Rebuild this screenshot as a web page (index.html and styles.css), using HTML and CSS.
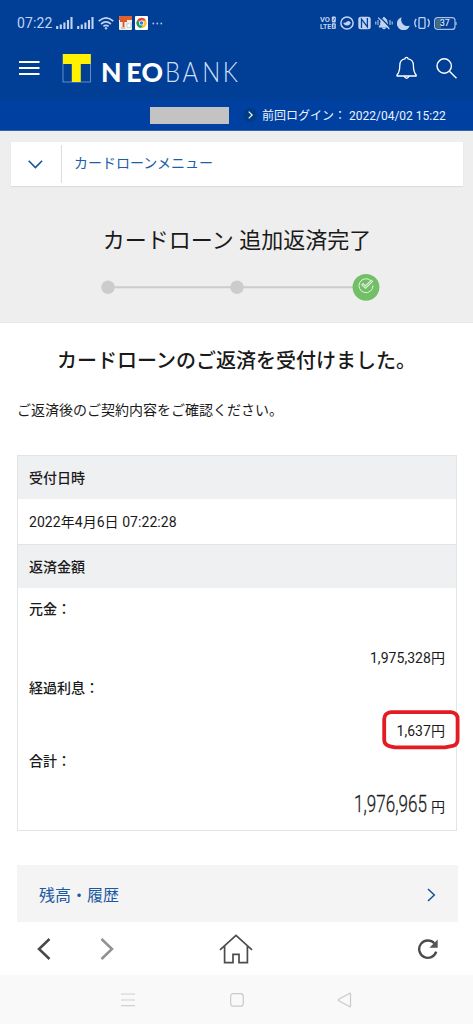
FILE: index.html
```html
<!DOCTYPE html>
<html lang="ja">
<head>
<meta charset="utf-8">
<title>カードローン 追加返済完了</title>
<link rel="stylesheet" href="styles.css">
</head>
<body>
<header class="header">
  <div class="status">
    <span class="clock">07:22</span>
    <svg class="signal" width="17" height="12" viewBox="0 0 17 12"><path d="M1.2 9v3M4.8 7.5V12M8.4 5.5V12M12 3V12M15.5 0V12" stroke="#c2d3f2" stroke-width="2.1"/></svg>
    <svg class="signal" width="17" height="12" viewBox="0 0 17 12"><path d="M1.2 9v3M4.8 7.5V12M8.4 5.5V12M12 3V12M15.5 0V12" stroke="#c2d3f2" stroke-width="2.1"/></svg>
    <svg class="wifi" width="16" height="13" viewBox="0 0 16 13" fill="none" stroke="#c2d3f2" stroke-width="1.7"><path d="M.7 4.2Q8-2.3 15.3 4.2M3.1 7Q8 2.6 12.9 7M5.4 9.4Q8 7.3 10.6 9.4"/><circle cx="8" cy="11.3" r=".9" fill="#c2d3f2" stroke-width=".8"/></svg>
    <svg class="app" width="13" height="14" viewBox="0 0 13 14"><rect width="13" height="14" rx="1" fill="#f4eee9"/><path d="M0 1Q0 0 1 0H13V4H0Z" fill="#e0602f"/><path d="M1 5H8M4.5 5V11" stroke="#d5582f" stroke-width="1.8"/><path d="M2 12H6" stroke="#a7a09b" stroke-width="1"/><path d="M7 8l2-2 1.5 2L13 6v6H8z" fill="#c9dcdc"/><circle cx="10" cy="9.5" r="1.5" fill="#fff"/></svg>
    <svg class="chrome" width="13" height="14" viewBox="0 0 13 14"><rect width="13" height="14" rx="1" fill="#fff"/><g transform="translate(-.5 0)"><path d="M7 7 2.5 4.4A5 5 0 0 1 11.6 4.8H7Z" fill="#e54538"/><path d="M7 7V4.8H11.6A5 5 0 0 1 6.8 12L9 8Z" fill="#f9c332"/><path d="M7 7 9 8 6.8 12A5 5 0 0 1 2.5 4.4Z" fill="#239c59"/><circle cx="7" cy="7" r="2.5" fill="#fff"/><circle cx="7" cy="7" r="1.8" fill="#3678df"/></g></svg>
    <svg class="dots" width="11" height="3" viewBox="0 0 11 3" fill="#b3c8ec"><circle cx="1.3" cy="1.5" r=".9"/><circle cx="5.3" cy="1.5" r=".9"/><circle cx="9.3" cy="1.5" r=".9"/></svg>
    <div class="status-right">
      <svg width="16" height="14" viewBox="0 0 16 14" class="volte"><text x="0" y="6.3" textLength="10" lengthAdjust="spacingAndGlyphs">VO</text><text x="0" y="13.3" textLength="11" lengthAdjust="spacingAndGlyphs">LTE</text><rect x="11.8" y=".6" width="4" height="5.8" rx="1"/><rect x="11.8" y="7.3" width="4" height="5.8" rx="1"/><path d="M13 5 14.7 2M13 9h1.5l-1.5 2.7h1.6" fill="none" stroke="#003f95" stroke-width=".7"/></svg>
      <svg width="14" height="14" viewBox="0 0 14 14"><circle cx="7" cy="7" r="6.1" fill="none" stroke="#c2d3f2" stroke-width="1.5"/><path d="M3.2 6.6Q5.2 7.4 7 5.6Q9 4 10.8 6.6A3.9 3.9 0 0 1 3.2 6.6" fill="#c2d3f2"/></svg>
      <svg width="13" height="14" viewBox="0 0 13 14"><rect x=".3" y=".7" width="12.4" height="12.6" rx="2.5" fill="#c2d3f2"/><path d="M3.5 12V3.2L9.4 10.8V2" fill="none" stroke="#003f95" stroke-width="1.3"/></svg>
      <svg width="18" height="14" viewBox="0 0 18 14"><path d="M4 11Q6 9 6 5.5Q6 3 8.2 2.3Q9-.2 9.8 2.3Q12 3 12 5.5 12 9 14 11Z" fill="#c2d3f2" stroke="#c2d3f2"/><path d="M7.5 12h3Q9 14 7.5 12M.8 5.5v3M3 4v5M17.2 5.5v3M15 4v5" fill="#c2d3f2" stroke="#c2d3f2"/><path d="M4.5 .5 15.5 12" stroke="#003f95" stroke-width="1.2"/><path d="M3.2 1.6 14.4 13" stroke="#c2d3f2" stroke-width="1.2"/></svg>
      <svg width="13" height="13" viewBox="0 0 13 13"><path d="M4.7.3A6.6 6.6 0 1 0 12.8 8.6 6.3 6.3 0 0 1 4.7.3Z" fill="#c2d3f2"/></svg>
      <svg width="16" height="14" viewBox="0 0 16 14" fill="none" stroke="#c2d3f2" stroke-width="1.3"><rect x="5" y="1.6" width="6" height="10.8" rx=".8"/><path d="M2.2 3Q-.7 7 2.2 11M13.8 3Q16.7 7 13.8 11"/></svg>
      <svg width="23" height="13" viewBox="0 0 23 13"><rect x=".6" y=".6" width="20.4" height="11.8" rx="3" fill="none" stroke="#aac0e6" stroke-width="1.2"/><path d="M2 3Q2 2 3 2H7V11H3Q2 11 2 10Z" fill="#476d7d"/><path d="M22 5v3" stroke="#aac0e6" stroke-width="1.2"/><text class="battery" x="6" y="9.4">37</text></svg>
    </div>
  </div>
  <div class="brandbar">
    <svg class="menu" width="21" height="14" viewBox="0 0 21 14"><path d="M0 1H20.5M0 7H20.5M0 13H20.5" stroke="#fff" stroke-width="1.8"/></svg>
    <svg class="logo" width="182" height="40" viewBox="0 0 182 40"><rect x="1" y="1.5" width="27.5" height="27.5" fill="#003f91" stroke="#7ba1d7" stroke-width=".8"/><path d="M1 1H28.7V11H18.8V29H9.8V11H1Z" fill="#fff100"/><text class="neo" x="39 64.2 79.5" y="29">NEO</text><g transform="scale(.9 1)"><text class="bank" x="114.5 134 155.8 178.5" y="29">BANK</text></g></svg>
    <svg class="bell" width="22" height="24" viewBox="0 0 22 24" fill="none" stroke="#fff" stroke-width="1.3" stroke-linejoin="round"><path d="M1 20V19Q3.8 16 3.8 9.5C3.8 5.6 6 3.2 9 2.8 9 .9 12 .9 12 2.8 15.4 3.2 17.4 5.6 17.4 9.5Q17.4 16 20.2 19V20ZM8.2 20.5Q10.6 24 13 20.5"/></svg>
    <svg class="search" width="22" height="22" viewBox="0 0 22 22" fill="none" stroke="#fff" stroke-width="1.4"><circle cx="8.2" cy="8" r="7.2"/><path d="M13.4 13.2 20.5 20.3"/></svg>
  </div>
  <div class="loginbar">
    <span class="mask"></span>
    <span class="go"><svg width="5" height="8" viewBox="0 0 5 8"><path d="M.7.6 4.2 4 .7 7.4" fill="none" stroke="#fff" stroke-width="1.2"/></svg></span>
    <span class="last">前回ログイン：</span><span class="when">2022/04/02 15:22</span>
  </div>
</header>
<section class="hero">
  <div class="dropdown">
    <span class="toggle"><svg width="15" height="9" viewBox="0 0 15 9"><path d="M.7.8 7.4 7.6 14.1.8" fill="none" stroke="#17519a" stroke-width="1.6"/></svg></span>
    <span class="dropdown-label">カードローンメニュー</span>
  </div>
  <h1>カードローン 追加返済完了</h1>
  <svg class="steps" width="280" height="28" viewBox="0 0 280 28"><path d="M7 14.3H258" stroke="#ccc" stroke-width="2"/><circle cx="7" cy="14.3" r="6.8" fill="#ccc"/><circle cx="136" cy="14.3" r="6.8" fill="#ccc"/><circle cx="265" cy="14.3" r="13.4" fill="#72bf68"/><g fill="none" stroke="#e2f4df"><path d="M269.8 7.6A7 7 0 1 0 272 12.5" stroke-width="1"/><path d="M261 10.8 264.5 14 271.3 7.6" stroke-width="2.8"/><path d="M261.5 11.2 264.5 14 270.8 8" stroke="#72bf68" stroke-width=".9"/></g></svg>
</section>
<main class="content">
  <h2>カードローンのご返済を受付けました。</h2>
  <p class="lead">ご返済後のご契約内容をご確認ください。</p>
  <div class="details">
    <div class="th first">受付日時</div>
    <div class="date">2022年4月6日 07:22:28</div>
    <div class="th second">返済金額</div>
    <div class="amounts">
      <div class="item principal">元金：</div>
      <div class="value v1">1,975,328円</div>
      <div class="item">経過利息：</div>
      <div class="value v2"><span class="marked">1,637円<svg class="marker" width="78" height="40" viewBox="0 0 78 40"><path d="M9 2.2H69Q75.7 3 75.6 9V30Q75.5 36 68 36.3L63 37.4H13L8 36.3Q2.2 35 2.2 30V9Q2.5 3 9 2.2Z" fill="none" stroke="#e31b23" stroke-width="3.8"/></svg></span></div>
      <div class="item">合計：</div>
      <div class="value total"><span class="sum-box"><span class="sum">1,976,965</span></span><span>円</span></div>
    </div>
  </div>
  <div class="history"><span>残高・履歴</span><svg width="9" height="14" viewBox="0 0 9 14"><path d="M1 1 7.3 7 1 13" fill="none" stroke="#17519a" stroke-width="1.5"/></svg></div>
</main>
<nav class="browser">
  <svg class="back" width="14" height="22" viewBox="0 0 14 22"><path d="M12.5 1 2 11 12.5 21" fill="none" stroke="#484848" stroke-width="2.5"/></svg>
  <svg class="forward" width="14" height="22" viewBox="0 0 14 22"><path d="M1.5 1 12 11 1.5 21" fill="none" stroke="#919191" stroke-width="2.5"/></svg>
  <svg class="home" width="34" height="30" viewBox="0 0 34 30"><path d="M1 15.8 17 1.4 33 15.8M5.6 12V28.6H14V20.3H20V28.6H28.4V12" fill="none" stroke="#4d4d4d" stroke-width="1.7"/></svg>
  <svg class="reload" width="22" height="22" viewBox="0 0 22 22"><path d="M17.3 5.3A8.7 8.7 0 1 0 19.2 13.7" fill="none" stroke="#4b4b4b" stroke-width="2.4"/><path d="M20.7 1.4V9.7H12.4Z" fill="#555"/></svg>
</nav>
<footer class="system">
  <svg class="sys-menu" width="14" height="14" viewBox="0 0 14 14"><path d="M0 1H14M0 7H14M0 12.7H14" stroke="#d0d0d0" stroke-width="1.2"/></svg>
  <svg class="sys-home" width="14" height="14" viewBox="0 0 14 14"><rect x=".7" y=".7" width="12.5" height="12.5" rx="2.5" fill="none" stroke="#c9c9c9" stroke-width="1.2"/></svg>
  <svg class="sys-back" width="15" height="16" viewBox="0 0 15 16"><path d="M13.5 1.4V14.6Q13.3 15 12.8 14.8L1.4 8.4Q.9 8 1.4 7.6L12.8 1.2Q13.3 1 13.5 1.4Z" fill="none" stroke="#c9c9c9" stroke-width="1.2"/></svg>
</footer>
</body>
</html>
```
FILE: styles.css
```css
* { box-sizing: border-box; }
body {
  margin: 0;
  width: 473px;
  height: 1024px;
  overflow: hidden;
  background: #fff;
  color: #1a1a1a;
  font: 14px/20px Roboto, "Noto Sans CJK JP", sans-serif;
}
svg { display: block; flex-shrink: 0; }
.header { height: 131px; background: #003f95; border-bottom: 1px solid #3862a9; }
.status { height: 46px; display: flex; align-items: center; padding-left: 17px; color: #c2d3f2; }
.clock { width: 39px; font-size: 14px; letter-spacing: .1px; }
.signal { margin-right: 4px; }
.wifi { margin: 0 5px 0 0; }
.chrome { margin: 0 4px 0 3px; }
.status-right { margin-left: auto; margin-right: 16px; display: flex; align-items: center; gap: 4px; }
.volte { font: bold 8px Roboto, sans-serif; fill: #c2d3f2; }
.battery { font: 500 8.5px Roboto, sans-serif; fill: #d7e2f7; }
.brandbar { height: 54px; display: flex; padding-left: 19px; }
.menu { margin-top: 15px; }
.logo { margin: 7px 0 0 22px; }
.neo { font: 900 26.5px Lato, sans-serif; fill: #fff; }
.bank { font: 300 26.5px Lato, sans-serif; fill: #d0dff7; }
.bell { margin: 10px 0 0 152px; }
.search { margin: 12px 0 0 18px; }
.loginbar { height: 30px; background: #0040a0; display: flex; align-items: center; padding-left: 150px; color: #edf3ff; font-size: 12px; }
.mask { width: 79px; height: 17px; background: #c3c3c3; }
.go { width: 14px; height: 14px; border-radius: 50%; background: #003b86; display: flex; align-items: center; justify-content: center; margin: 0 5px 0 14px; }
.last { width: 87px; padding-top: 1px; }
.when { white-space: nowrap; padding-top: 2px; }
.hero { height: 192px; background: #eee; padding: 11px 10px 0 11px; border-bottom: 1px solid #e7e7e7; }
.dropdown { height: 44px; background: #fff; display: flex; align-items: center; box-shadow: 0 1px 1px #ddd; width: 452px; color: #205da5; }
.toggle { width: 51px; height: 38px; border-right: 1px solid #ddd; display: flex; align-items: center; justify-content: center; padding-right: 2px; }
.dropdown-label { padding: 0 0 2px 12px; }
h1 { margin: 39px 0 0; text-align: center; font-size: 22px; line-height: 32px; font-weight: 400; }
.steps { margin: 16px 0 0 90px; }
.content { padding: 0 17px; height: 599px; }
h2 { margin: 0; padding-top: 23px; font-size: 20px; line-height: 30px; font-weight: 500; text-align: center; white-space: nowrap; }
.lead { margin: 24px 0 0; }
.details { margin-top: 35px; width: 440px; height: 376px; border: 1px solid #e2e4e6; }
.th { background: #eff0f2; padding-left: 11px; font-weight: 500; }
.first { height: 43px; line-height: 45px; }
.date { height: 46px; line-height: 46px; padding-left: 11px; border-bottom: 1px solid #e2e4e6; letter-spacing: .05px; }
.second { height: 43px; line-height: 44px; }
.amounts { padding: 11px 11px 0; }
.item { font-weight: 500; height: 20px; }
.value { text-align: right; height: 20px; letter-spacing: .05px; }
.v1 { margin: 29px 0 10px; }
.v2 { margin: 23px 0 10px; }
.marked { position: relative; }
.marker { position: absolute; right: -15px; top: -13px; }
.total { margin-top: 21px; display: flex; justify-content: flex-end; align-items: baseline; }
.sum-box { width: 73px; margin-right: 4px; display: flex; }
.sum { font-size: 24px; line-height: 24px; font-weight: 300; -webkit-text-stroke: .3px #1a1a1a; transform: scaleX(.71); transform-origin: left; flex-shrink: 0; }
.history { margin-top: 34px; width: 441px; height: 57px; padding: 3px 22px 0 22px; background: #f4f4f4; display: flex; align-items: center; justify-content: space-between; font-size: 16px; color: #1a58a0; }
.history span { padding-top: 2px; }
.browser { height: 53px; display: flex; align-items: center; padding-left: 37px; }
.forward { margin-left: 49px; }
.home { margin-left: 105px; }
.reload { margin-left: 164px; }
.system { height: 49px; background: #f9f9f9; display: flex; align-items: center; padding-left: 121px; }
.sys-home { margin-left: 95px; }
.sys-back { margin-left: 93px; }
```
